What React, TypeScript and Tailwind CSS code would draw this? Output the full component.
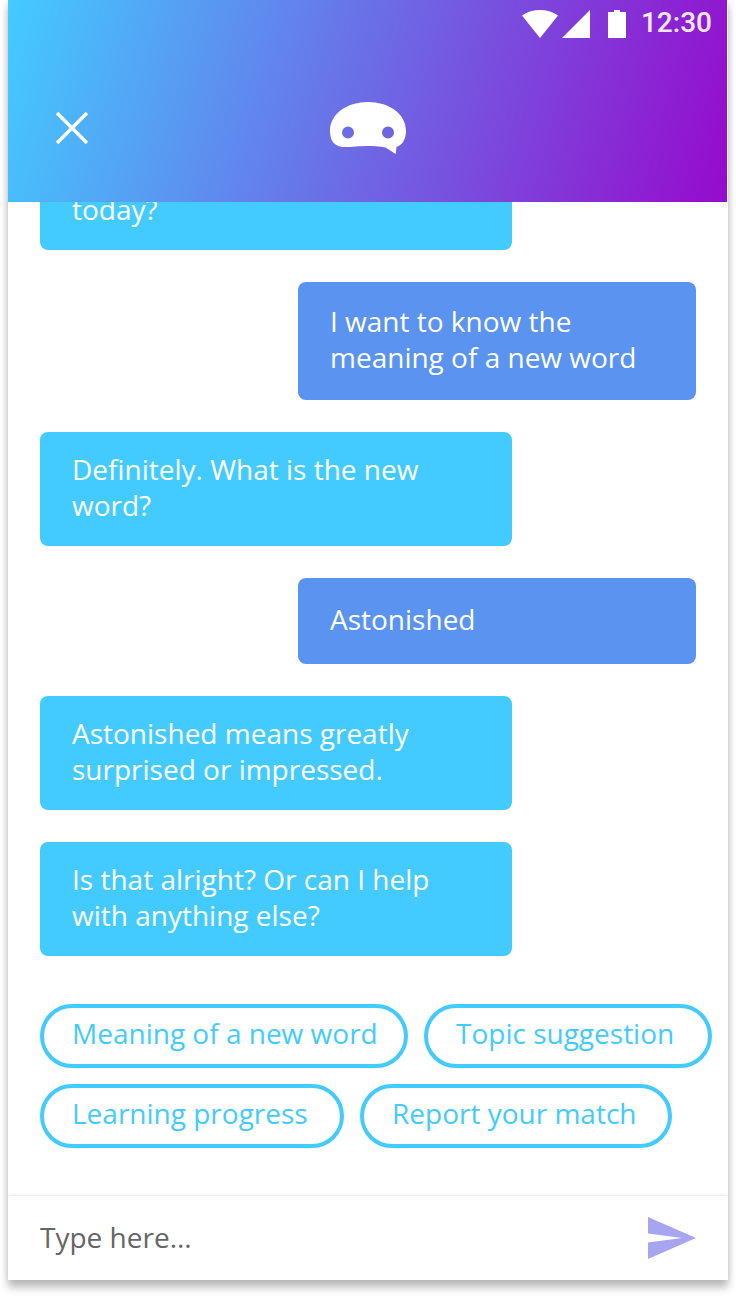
const messages = [
  { from: "bot", text: "today?" },
  { from: "user", text: "I want to know the meaning of a new word" },
  { from: "bot", text: "Definitely. What is the new word?" },
  { from: "user", text: "Astonished" },
  { from: "bot", text: "Astonished means greatly surprised or impressed." },
  { from: "bot", text: "Is that alright? Or can I help with anything else?" },
];

const suggestions = [
  { label: "Meaning of a new word", width: "min-w-[368px]" },
  { label: "Topic suggestion", width: "min-w-[288px]" },
  { label: "Learning progress", width: "min-w-[304px]" },
  { label: "Report your match", width: "min-w-[312px]" },
];

function StatusBar() {
  return (
    <div className="flex h-12 items-start justify-end pr-4 font-['Roboto',sans-serif] text-[28px] leading-[32px] text-white">
      <svg width="104" height="48" viewBox="0 0 104 48" fill="white" aria-hidden="true">
        <path d="M0 15.500C5.500 11.500 11.500 10 18 10s12.500 1.500 18 5.500L18 38z" />
        <path d="M68 10v28H40z" />
        <path d="M86 12h6v-2h6v2h6v26H86z" />
      </svg>
      <span className="ml-[15px] pt-[7px] font-medium opacity-90 antialiased">12:30</span>
    </div>
  );
}

function Header() {
  return (
    <header className="h-[202px] bg-[linear-gradient(105deg,#43cbff_0%,#9708cc_101%)] bg-[length:calc(100%-1px)_100%] bg-no-repeat">
      <StatusBar />
      <div className="grid grid-cols-3 items-center px-10 pt-12">
        <button type="button" aria-label="Close" className="w-12">
          <svg width="48" height="64" viewBox="0 0 48 64" stroke="white" strokeWidth="3.400" aria-hidden="true">
            <path d="M9 17l30 30M39 17L9 47" />
          </svg>
        </button>
        <svg className="mx-auto" width="76" height="64" viewBox="0 0 76 64" aria-hidden="true">
          <path
            fill="white"
            fillRule="evenodd"
            d="M38 6C58 6 76 17 76 35c0 8-3.500 14-9.500 16l-.8 7-10.200-6.500C44 49.600 32 49.800 20 51 6 52 0 47 0 35 0 17 18 6 38 6zM18 30.500a6 6 0 1 0 0 12 6 6 0 0 0 0-12zm40 0a6 6 0 1 0 0 12 6 6 0 0 0 0-12z"
          />
        </svg>
      </div>
    </header>
  );
}

function Bubble({ from, text }: { from: string; text: string }) {
  return from === "bot" ? (
    <p className="w-[472px] max-w-full rounded-lg bg-[#43cbff] px-8 pt-[19px] pb-[23px]">{text}</p>
  ) : (
    <p className="flex min-h-[86px] w-[398px] max-w-full flex-col justify-center self-end rounded-lg bg-[#5b93f0] px-8 pt-[21px] pb-[25px]">
      {text}
    </p>
  );
}

export default function App() {
  return (
    <div className="min-h-screen bg-white px-2 pb-4 font-['Open_Sans',sans-serif] text-[28px] leading-[36px]">
      <div className="flex min-h-[calc(100vh-16px)] flex-col bg-white shadow-[0_8px_8px_rgba(0,0,0,0.24),0_0_8px_rgba(0,0,0,0.12)]">
        <Header />
        <main className="flex-1 overflow-hidden pb-12">
          <div className="-mt-[30px] flex flex-col gap-8 px-8 text-white">
            {messages.map((m) => (
              <Bubble key={m.text} from={m.from} text={m.text} />
            ))}
          </div>
          <div className="mt-12 flex flex-wrap gap-4 pr-4 pl-8">
            {suggestions.map((s) => (
              <button
                key={s.label}
                type="button"
                className={`rounded-full border-4 border-[#43cbff] pt-[7px] pr-6 pb-[13px] pl-7 text-left text-[#43cbff] ${s.width}`}
              >
                {s.label}
              </button>
            ))}
          </div>
        </main>
        <form
          className="flex h-[84px] items-center px-8 shadow-[0_0_4px_rgba(0,0,0,0.16)] [clip-path:inset(-8px_0_0_0)]"
          onSubmit={(e) => e.preventDefault()}
        >
          <input
            type="text"
            aria-label="Message"
            placeholder="Type here..."
            className="min-w-0 flex-1 pb-0.5 outline-none placeholder:text-[#666666]"
          />
          <button type="submit" aria-label="Send">
            <svg width="48" height="42" viewBox="0 0 48 42" fill="#a7a4f0" aria-hidden="true">
              <path d="M0 0l48 21L0 42V25.500L34 21 0 16.500z" />
            </svg>
          </button>
        </form>
      </div>
    </div>
  );
}
